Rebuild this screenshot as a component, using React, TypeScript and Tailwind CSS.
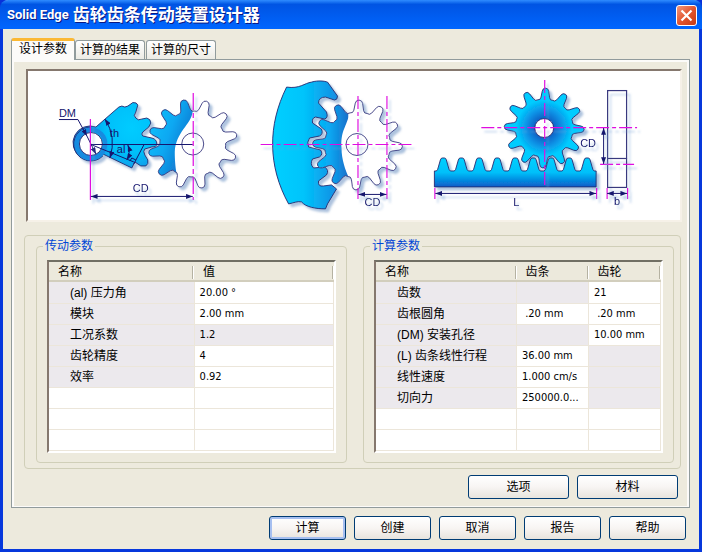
import { useState } from 'react'
import clsx from 'clsx'

type Cell = {
  text: string
  locked?: boolean
}

type ParamRow = {
  name: string
  cells: Cell[]
}

const TABS = ['设计参数', '计算的结果', '计算的尺寸']

const driveRows: ParamRow[] = [
  { name: '(al) 压力角', cells: [{ text: '20.00 °' }] },
  { name: '模块', cells: [{ text: '2.00 mm' }] },
  { name: '工况系数', cells: [{ text: '1.2', locked: true }] },
  { name: '齿轮精度', cells: [{ text: '4' }] },
  { name: '效率', cells: [{ text: '0.92' }] }
]

const calcRows: ParamRow[] = [
  { name: '齿数', cells: [{ text: '', locked: true }, { text: '21' }] },
  { name: '齿根圆角', cells: [{ text: ' .20 mm' }, { text: ' .20 mm' }] },
  { name: '(DM) 安装孔径', cells: [{ text: '', locked: true }, { text: '10.00 mm' }] },
  { name: '(L) 齿条线性行程', cells: [{ text: '36.00 mm' }, { text: '', locked: true }] },
  { name: '线性速度', cells: [{ text: '1.000 cm/s' }, { text: '', locked: true }] },
  { name: '切向力', cells: [{ text: '250000.0...' }, { text: '', locked: true }] }
]

const TABLE_ROWS = 8

const polar = (cx: number, cy: number, r: number, deg: number) => {
  const a = (deg * Math.PI) / 180
  return `${(cx + r * Math.cos(a)).toFixed(2)} ${(cy + r * Math.sin(a)).toFixed(2)}`
}

// 12 teeth, one every 30 degrees
const gearPath = (cx: number, cy: number, outer: number, root: number, start: number) => {
  let d = ''
  for (let i = 0; i < 12; i++) {
    const a = start + i * 30
    const p = (r: number, off: number) => polar(cx, cy, r, a + off)
    d += `${i === 0 ? 'M' : 'L'}${p(root + 2, -8)} L${p(outer - 3, -5)} `
    d += `Q${p(outer, -4)} ${p(outer, 0)} Q${p(outer, 4)} ${p(outer - 3, 5)} `
    d += `L${p(root + 2, 8)} Q${p(root - 1, 10)} ${p(root, 15)} Q${p(root - 1, 20)} ${p(root + 2, 22)} `
  }
  return d + 'Z'
}

const rackPath = () => {
  let d = 'M435 187 V171 '
  for (let i = 0; i < 9; i++) {
    const x = 444 + i * 18
    d += `L${x - 7} 171 Q${x - 5.5} 170 ${x - 5} 167 L${x - 3} 160 Q${x - 2.5} 158 ${x - 1} 158 H${x + 1} Q${x + 2.5} 158 ${x + 3} 160 L${x + 5} 167 Q${x + 5.5} 170 ${x + 7} 171 `
  }
  return d + 'L597 171 V187 Z'
}

const GEAR_A = gearPath(193, 144, 45, 33, -12)
const GEAR_B = gearPath(358, 145, 45, 33, -88)
const GEAR_C = gearPath(545, 128, 40, 29, 2)

const GearDiagram = () => (
  <svg
    viewBox="28 71 653 149"
    className="block h-[149px] w-full"
    role="img"
    aria-label="齿轮齿条示意图"
    fontFamily="'Liberation Sans', Arial, sans-serif"
    fontSize="11"
  >
    <defs>
      <filter id="shadow" filterUnits="userSpaceOnUse" x="28" y="71" width="653" height="149">
        <feDropShadow dx="3" dy="3" stdDeviation="1" floodColor="#5c86bd" floodOpacity="0.5" />
      </filter>
      <filter id="lineShadow" filterUnits="userSpaceOnUse" x="28" y="71" width="653" height="149">
        <feDropShadow dx="3" dy="4" stdDeviation="1" floodColor="#7fa6d8" floodOpacity="0.5" />
      </filter>
      <marker id="arrow" viewBox="0 0 8 6" refX="8" refY="3" markerWidth="7" markerHeight="5" markerUnits="userSpaceOnUse" orient="auto-start-reverse">
        <path d="M0 0 L8 3 L0 6 Z" fill="#15156e" />
      </marker>
      <radialGradient id="pinion" gradientUnits="userSpaceOnUse" cx="132" cy="128" r="50">
        <stop offset="0" stopColor="#00ccff" />
        <stop offset="0.5" stopColor="#00c0fa" />
        <stop offset="1" stopColor="#138be0" />
      </radialGradient>
      <linearGradient id="mesh" gradientUnits="userSpaceOnUse" x1="150" y1="140" x2="192" y2="156">
        <stop offset="0" stopColor="#08b8f8" />
        <stop offset="0.35" stopColor="#08a8f2" />
        <stop offset="1" stopColor="#1c68c4" />
      </linearGradient>
      <linearGradient id="ring" gradientUnits="userSpaceOnUse" x1="272" y1="0" x2="336" y2="0">
        <stop offset="0" stopColor="#00d0ff" />
        <stop offset="0.5" stopColor="#00c4fb" />
        <stop offset="1" stopColor="#1490e4" />
      </linearGradient>
      <linearGradient id="inner" gradientUnits="userSpaceOnUse" x1="310" y1="0" x2="350" y2="0">
        <stop offset="0" stopColor="#00c4fb" />
        <stop offset="0.5" stopColor="#08a8f2" />
        <stop offset="1" stopColor="#1c6cc8" />
      </linearGradient>
      <radialGradient id="wheel" gradientUnits="userSpaceOnUse" cx="545" cy="128" r="36">
        <stop offset="0.25" stopColor="#0b5fc4" />
        <stop offset="0.5" stopColor="#0c92e6" />
        <stop offset="0.78" stopColor="#00ccff" />
      </radialGradient>
      <linearGradient id="rack" x1="0" y1="0" x2="0" y2="1">
        <stop offset="0" stopColor="#00d0ff" />
        <stop offset="0.5" stopColor="#00c0fa" />
        <stop offset="1" stopColor="#0a5cc8" />
      </linearGradient>
      <clipPath id="meshClip">
        <path d="M193 95 V112 C191 125 176 132 175 152 C175 162 176 170 177 174 V195 H140 V95 Z" />
      </clipPath>
      <clipPath id="innerClip">
        <path d="M349 95 L349 117 C346 128 341 132 342 148 C342 160 346 170 349 177 V195 H300 V95 Z" />
      </clipPath>
    </defs>

    {/* external pair */}
    <g filter="url(#shadow)" stroke="#28286e" strokeWidth="0.9">
      <path
        fill="url(#pinion)"
        d="M96 127 L119 107 L122 106 L125 107 L128 106 L133 102.500 Q137 102 138 105 L136 112 Q133 116 136 118 Q138 121 142 119 L147 118 Q151 119 151 123 L149 127 L143 132 Q141 134 143 136 L152 138 Q157 139 157 144 Q157 147 152 147 L145 149 Q143 151 145 155 L148 160 Q149 164 146 166 L141 166 L135 162 L132 168 L103 154 A17 17 0 1 1 96 127 Z"
      />
      <path d="M91 127 A17 17 0 1 0 103 156" fill="#168be0" />
      <circle cx="91" cy="144" r="14.500" fill="none" stroke="#168be0" strokeWidth="4" />
      <circle cx="91" cy="144" r="11.500" fill="#fff" />
    </g>
    <g filter="url(#shadow)">
      <path d={GEAR_A} fill="#fff" />
      <path d={GEAR_A} fill="url(#mesh)" clipPath="url(#meshClip)" />
      <path d={GEAR_A} fill="none" stroke="#38387e" strokeWidth="0.9" />
      <circle cx="193" cy="144" r="11" fill="none" stroke="#38387e" strokeWidth="0.9" />
    </g>
    <g fill="none" stroke="#15156e" strokeWidth="1">
      <path d="M59 119.500 H78 L87 136" markerEnd="url(#arrow)" />
      <path d="M87 136 L96 154" markerEnd="url(#arrow)" />
      <path d="M91 144.500 H193" />
      <path d="M91 144.500 L134 162" />
      <path d="M144 145 L134 164" />
      <path d="M130 161 L132 158 L136 160" />
      <path d="M105 119 Q117 137 110 158" markerStart="url(#arrow)" markerEnd="url(#arrow)" />
      <path d="M128 145 Q131 153 127 160" markerStart="url(#arrow)" markerEnd="url(#arrow)" />
    </g>
    <g stroke="#e010e0" strokeWidth="1.200" filter="url(#lineShadow)">
      <path d="M90.500 119 V200" />
      <path d="M193.500 93 V200" strokeDasharray="17 3 5 3" />
    </g>
    <g fill="#15156e">
      <text x="59" y="117">DM</text>
      <text x="110" y="137">th</text>
      <text x="117" y="153">al</text>
    </g>
    <g filter="url(#lineShadow)">
      <path d="M91 196.500 H193" stroke="#15156e" markerStart="url(#arrow)" markerEnd="url(#arrow)" />
      <text x="133" y="192" fill="#15156e">CD</text>
    </g>

    {/* internal ring */}
    <g filter="url(#shadow)" stroke="#28286e" strokeWidth="0.9">
      <path
        fill="url(#ring)"
        d="M287 87 C300 89 305 83 312 82 C319 80 325 81 328 82 L338 96 Q338 100 335 100 L326 97 Q319 97 319 103 L327 112 Q329 118 325 119 L316 117 Q312 118 313 123 L322 129 Q324 134 320 136 L310 138 Q307 142 309 147 L321 150 Q324 154 320 157 L313 159 Q310 164 314 168 L325 167 Q330 170 327 175 L319 181 Q318 187 324 186 L332 185 L337 189 L328 204 L326 209 C316 209 306 207 302 202 C298 201 294 203 289 204 C268 166 268 125 287 87 Z"
      />
      <path d={GEAR_B} fill="#fff" stroke="none" />
      <path d={GEAR_B} fill="url(#inner)" stroke="none" clipPath="url(#innerClip)" />
      <path d={GEAR_B} fill="none" stroke="#38387e" />
      <circle cx="357.500" cy="144.500" r="11" fill="none" stroke="#38387e" />
    </g>
    <g stroke="#e010e0" strokeWidth="1.200" strokeDasharray="13 3 4 3" filter="url(#lineShadow)">
      <path d="M261 144.500 H415" />
      <path d="M358.500 96 V199" />
      <path d="M387.500 96 V199" />
    </g>
    <g filter="url(#lineShadow)">
      <path d="M359 194.500 H387" stroke="#15156e" markerStart="url(#arrow)" markerEnd="url(#arrow)" />
      <text x="365" y="206" fill="#15156e">CD</text>
    </g>

    {/* rack and pinion */}
    <g filter="url(#shadow)" stroke="#28286e" strokeWidth="0.9">
      <path d={GEAR_C} fill="url(#wheel)" />
      <circle cx="545" cy="128" r="9.500" fill="#fff" />
    </g>
    <path filter="url(#shadow)" d={rackPath()} fill="url(#rack)" stroke="#28286e" strokeWidth="0.9" />
    <g fill="none" stroke="#38387e" strokeWidth="1.200" filter="url(#lineShadow)">
      <rect x="608.500" y="90.500" width="19" height="97" />
      <path d="M608 158.500 H628" />
    </g>
    <g stroke="#e010e0" strokeWidth="1.200" filter="url(#lineShadow)">
      <path d="M482 127.500 H638" strokeDasharray="13 3 4 3" />
      <path d="M545.500 80 V187" strokeDasharray="13 3 4 3" />
      <path d="M601 164.500 H635" strokeDasharray="13 3 4 3" />
      <path d="M435.500 188 V199 M597.500 188 V199 M608 188 V199 M628.500 188 V199" />
    </g>
    <g stroke="#15156e" filter="url(#lineShadow)">
      <path d="M436 193.500 H597" markerStart="url(#arrow)" markerEnd="url(#arrow)" />
      <path d="M608 193.500 H628" markerStart="url(#arrow)" markerEnd="url(#arrow)" />
      <path d="M604.500 128 V164" markerStart="url(#arrow)" markerEnd="url(#arrow)" />
    </g>
    <g fill="#15156e" filter="url(#lineShadow)">
      <text x="581" y="147">CD</text>
      <text x="514" y="206">L</text>
      <text x="615" y="205">b</text>
    </g>
  </svg>
)

const ParamTable = ({ headers, rows, label }: { headers: string[]; rows: ParamRow[]; label: string }) => {
  const blanks = Array.from({ length: TABLE_ROWS - rows.length })
  const wide = headers.length === 2

  return (
    <div className="border-2 border-t-[#716f64] border-l-[#85786e] border-r-white border-b-white bg-white">
      <table aria-label={label} className="w-full table-fixed border-collapse">
        <colgroup>
          <col />
          {headers.slice(1).map((h) => (
            <col key={h} className={wide ? 'w-[49%]' : 'w-[72px]'} />
          ))}
        </colgroup>
        <thead>
          <tr className="h-5 bg-[#ece9dc] shadow-[inset_0_-2px_0_#d2cebd]">
            {headers.map((h) => (
              <th key={h} scope="col" className="p-0 text-left font-normal">
                <div className="flex h-5 items-center justify-between pl-[9px]">
                  {h}
                  <span className="h-[13px] w-[2px] border-l border-[#b5b2a2] bg-white" />
                </div>
              </th>
            ))}
          </tr>
        </thead>
        <tbody>
          {rows.map((row) => (
            <tr key={row.name} className="h-[21px]">
              <th
                scope="row"
                className="h-[21px] border-r border-b border-[#ece6da] bg-[#ece9ed] p-0 pt-px pl-[21px] text-left leading-4 font-normal whitespace-nowrap"
              >
                {row.name}
              </th>
              {row.cells.map((cell, i) => (
                <td
                  key={i}
                  className={clsx(
                    "h-[21px] border-r border-b border-[#ece6da] p-0 pt-px pl-[5px] font-['DejaVu_Sans_Condensed','Noto_Sans_CJK_SC',sans-serif] text-[11px] leading-4 whitespace-pre",
                    cell.locked ? 'bg-[#ece9ed]' : 'bg-white'
                  )}
                >
                  {cell.text}
                </td>
              ))}
            </tr>
          ))}
          {blanks.map((_, i) => (
            <tr key={i} className="h-[21px]">
              {headers.map((h) => (
                <td key={h} className="h-[21px] border-r border-b border-[#ece6da] p-0" />
              ))}
            </tr>
          ))}
        </tbody>
      </table>
    </div>
  )
}

const ParamGroup = ({ title, headers, rows }: { title: string; headers: string[]; rows: ParamRow[] }) => (
  <fieldset className="min-w-0 rounded border border-[#d0cfb8] px-[10px] pt-[7px] pb-[9px]">
    <legend className="-ml-1 px-[2px] leading-[14px] text-[#0046d5]">{title}</legend>
    <ParamTable headers={headers} rows={rows} label={title} />
  </fieldset>
)

const XpButton = ({ children, wide, primary }: { children: string; wide?: boolean; primary?: boolean }) => (
  <button
    type="button"
    className={clsx(
      'h-6 rounded-[3px] border border-[#003c74] bg-linear-to-b from-white via-[#f8f5f3] to-[#e8e4dd] leading-4',
      wide ? 'w-[101px]' : 'w-[77px]',
      primary && 'shadow-[inset_0_0_0_2px_#a6bff0]'
    )}
  >
    {children}
  </button>
)

const App = () => {
  const [activeTab, setActiveTab] = useState(0)

  return (
    <div className="min-h-screen bg-[#0831d9]">
      <div className="flex min-h-screen flex-col rounded-t-lg border-x-3 border-b-3 border-[#0738dc] bg-[#edeadd] font-['Liberation_Sans','Noto_Sans_CJK_SC',sans-serif] text-xs text-black">
        <header className="-mx-[3px] flex h-[29px] items-center justify-between rounded-t-lg bg-linear-to-b from-[#2f8cff] via-[#0054e3] via-15% to-[#0066ff] pt-px pr-[5px] pl-[7px]">
          <h1 className="flex items-center gap-1 font-['Roboto','Noto_Sans_CJK_SC',sans-serif] leading-5 font-bold whitespace-nowrap text-white [text-shadow:1px_1px_0_#0a1883]">
            <span className="text-[13px]">Solid Edge</span>
            <span className="text-[17px]">齿轮齿条传动装置设计器</span>
          </h1>
          <button
            type="button"
            aria-label="关闭"
            className="flex h-[21px] w-[21px] items-center justify-center rounded-[3px] border border-white bg-linear-to-br from-[#f0967a] via-[#e2552e] to-[#c83a10]"
          >
            <svg viewBox="0 0 13 13" className="h-[13px] w-[13px]" stroke="#fff" strokeWidth="2.200">
              <path d="M1.500 1.500 L11.500 11.500 M11.500 1.500 L1.500 11.500" />
            </svg>
          </button>
        </header>

        <main className="pt-[9px] pr-[9px] pl-2">
          <div role="tablist" className="flex items-end">
            {TABS.map((tab, i) => (
              <button
                key={tab}
                type="button"
                role="tab"
                aria-selected={activeTab === i}
                onClick={() => setActiveTab(i)}
                className={clsx(
                  'rounded-t-[3px] border border-b-0 border-[#919b9c]',
                  activeTab === i
                    ? 'relative -mb-px h-[22px] border-t-3 border-t-[#fbb833] bg-[#fcfbf9] px-[7px] pb-1 leading-4'
                    : 'mr-px h-[19px] bg-linear-to-b from-white to-[#ecebe4] px-1 leading-4'
                )}
              >
                {tab}
              </button>
            ))}
          </div>

          <section className="border border-[#919b9c] pt-[9px] pr-[8px] pb-2 pl-3 shadow-[inset_2px_2px_0_#fcfbf9,inset_-2px_-1px_0_#fcfbf9]">
            <div className="-mr-px ml-[2px] border-2 border-t-[#85786e] border-l-[#85786e] border-r-[#f6f1e8] border-b-[#f6f1e8] bg-white">
              <GearDiagram />
            </div>

            <div className="mt-[13px] grid grid-cols-2 gap-4 rounded border border-[#d0cfb8] pt-[3px] pr-[6px] pb-[5px] pl-[11px]">
              <ParamGroup title="传动参数" headers={['名称', '值']} rows={driveRows} />
              <ParamGroup title="计算参数" headers={['名称', '齿条', '齿轮']} rows={calcRows} />
            </div>

            <div className="mt-[6px] flex justify-end gap-2 pr-[3px]">
              <XpButton wide>选项</XpButton>
              <XpButton wide>材料</XpButton>
            </div>
          </section>
        </main>

        <footer className="flex justify-end gap-2 pt-2 pr-[13px] pb-[9px]">
          <XpButton primary>计算</XpButton>
          <XpButton>创建</XpButton>
          <XpButton>取消</XpButton>
          <XpButton>报告</XpButton>
          <XpButton>帮助</XpButton>
        </footer>
      </div>
    </div>
  )
}

export default App
